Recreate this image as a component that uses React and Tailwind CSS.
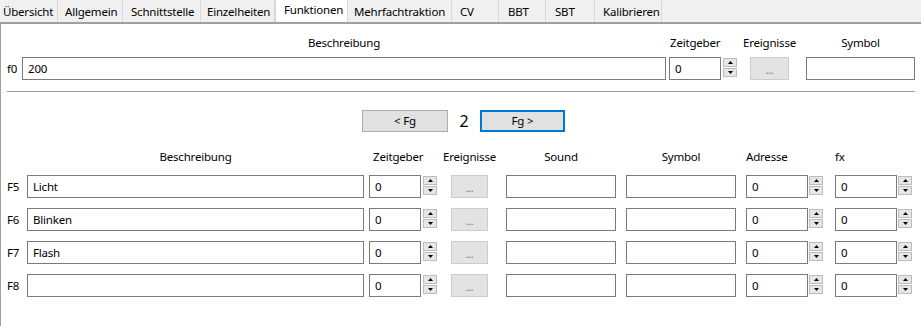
import React from "react";

const tabs = [
  { t: "Übersicht", w: 58, pl: 3 },
  { t: "Allgemein", w: 65, pl: 7 },
  { t: "Schnittstelle", w: 78, pl: 8 },
  { t: "Einzelheiten", w: 74, pl: 6 },
  { t: "Funktionen", w: 73, pl: 8, sel: true },
  { t: "Mehrfachtraktion", w: 104, pl: 6 },
  { t: "CV", w: 47, pl: 8 },
  { t: "BBT", w: 47, pl: 9 },
  { t: "SBT", w: 49, pl: 9 },
  { t: "Kalibrieren", w: 67, pl: 8 },
];

function Spinner() {
  return (
    <div className="flex flex-col gap-[1px] w-[14px] mt-[1px] self-start">
      <div className="h-[9px] border border-[#bcbcbc] bg-[#e6e6e6] flex items-center justify-center">
        <svg width="5" height="3" viewBox="0 0 5 3">
          <path d="M0 3 L2.5 0 L5 3Z" fill="#000" />
        </svg>
      </div>
      <div className="h-[9px] border border-[#bcbcbc] bg-[#e6e6e6] flex items-center justify-center">
        <svg width="5" height="3" viewBox="0 0 5 3">
          <path d="M0 0 L2.5 3 L5 0Z" fill="#000" />
        </svg>
      </div>
    </div>
  );
}

function Box({ w, text }) {
  return (
    <div
      className="h-[23px] border border-[#7a7a7a] bg-white flex items-center pl-[5px] text-black shrink-0"
      style={{ width: w }}
    >
      {text}
    </div>
  );
}

function Dots({ w }) {
  return (
    <div
      className="h-[23px] border border-[#cccccc] bg-[#e3e3e3] flex items-center justify-center text-[10px] text-[#6d6d6d] shrink-0 leading-none pt-[3px]"
      style={{ width: w }}
    >
      ...
    </div>
  );
}

function Header({ w, text, align = "center", pl = 0 }) {
  return (
    <div
      className={`h-[16px] leading-[16px] whitespace-nowrap shrink-0 ${
        align === "center" ? "flex justify-center" : "flex justify-start"
      }`}
      style={{ width: w, paddingLeft: pl }}
    >
      <span>{text}</span>
    </div>
  );
}

function Row({ label, text }) {
  return (
    <div className="flex items-start h-[23px]">
      <div className="w-[20px] h-[23px] flex items-center">{label}</div>
      <Box w={337} text={text} />
      <div className="w-[5px]" />
      <Box w={52} text="0" />
      <div className="w-[2px]" />
      <Spinner />
      <div className="w-[14px]" />
      <Dots w={37} />
      <div className="w-[18px]" />
      <Box w={110} />
      <div className="w-[10px]" />
      <Box w={110} />
      <div className="w-[10px]" />
      <Box w={62} text="0" />
      <div className="w-[1px]" />
      <Spinner />
      <div className="w-[12px]" />
      <Box w={62} text="0" />
      <div className="w-[1px]" />
      <Spinner />
    </div>
  );
}

export default function App() {
  return (
    <div className="w-[921px] h-[326px] bg-white overflow-hidden text-black font-['Noto_Sans',sans-serif] text-[11.5px] tracking-[-0.2px]">
      <div className="flex h-[24px] bg-[#f0f0f0] border-b-2 border-[#a0a0a0]">
        {tabs.map((t) => (
          <div
            key={t.t}
            className={`h-[22px] border-r border-[#d9d9d9] whitespace-nowrap leading-[16px] shrink-0 ${
              t.sel ? "bg-white pt-[2px] border-l border-l-[#d9d9d9]" : "bg-[#f0f0f0] pt-[4px]"
            }`}
            style={{ width: t.w, paddingLeft: t.pl }}
          >
            {t.t}
          </div>
        ))}
      </div>
      <div className="border-l border-[#a0a0a0] h-[302px] pl-[6px] flex flex-col">
        {/* top header */}
        <div className="flex mt-[11px]">
          <div className="w-[15px]" />
          <Header w={644} text="Beschreibung" />
          <div className="w-[3px]" />
          <Header w={68} text="Zeitgeber" align="left" pl={1} />
          <div className="w-[13px]" />
          <Header w={39} text="Ereignisse" />
          <div className="w-[17px]" />
          <Header w={109} text="Symbol" />
        </div>
        <div className="flex items-start mt-[6px]">
          <div className="w-[15px] h-[23px] flex items-center">f0</div>
          <Box w={644} text="200" />
          <div className="w-[3px]" />
          <Box w={52} text="0" />
          <div className="w-[2px]" />
          <Spinner />
          <div className="w-[13px]" />
          <Dots w={39} />
          <div className="w-[17px]" />
          <Box w={109} />
        </div>
        <div className="mt-[11px] h-[1px] w-[908px] bg-[#a0a0a0]" />
        <div className="flex items-center mt-[18px] pl-[355px]">
          <div className="w-[86px] h-[22px] border border-[#adadad] bg-[#e1e1e1] flex items-center justify-center">
            &lt; Fg
          </div>
          <div className="w-[32px] text-center text-[16px] leading-[20px]">2</div>
          <div className="w-[85px] h-[22px] border-2 border-[#0078d7] bg-[#e1e1e1] flex items-center justify-center">
            Fg &gt;
          </div>
        </div>
        {/* bottom header */}
        <div className="flex mt-[17px]">
          <div className="w-[20px]" />
          <Header w={337} text="Beschreibung" />
          <div className="w-[5px]" />
          <Header w={68} text="Zeitgeber" align="left" pl={4} />
          <div className="w-[14px]" />
          <Header w={37} text="Ereignisse" />
          <div className="w-[18px]" />
          <Header w={110} text="Sound" />
          <div className="w-[10px]" />
          <Header w={110} text="Symbol" />
          <div className="w-[10px]" />
          <Header w={77} text="Adresse" align="left" />
          <div className="w-[12px]" />
          <Header w={62} text="fx" align="left" />
        </div>
        <div className="flex flex-col gap-[10px] mt-[10px]">
          <Row label="F5" text="Licht" />
          <Row label="F6" text="Blinken" />
          <Row label="F7" text="Flash" />
          <Row label="F8" text="" />
        </div>
      </div>
    </div>
  );
}
